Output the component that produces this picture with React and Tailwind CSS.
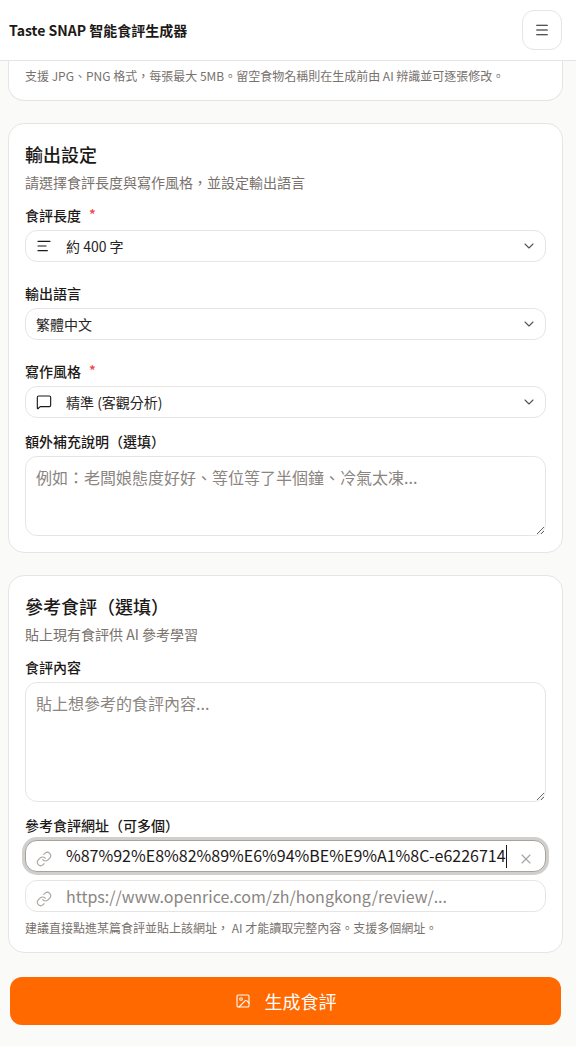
import React from 'react'
import { ChevronDown, Image, Link, Menu, MessageSquare, AlignLeft, X } from 'lucide-react'

const fontStack = { fontFamily: '"Noto Sans CJK TC", "Noto Sans", sans-serif' }

const Label = ({ children, required, className = '' }) => (
  <div className={`flex items-center text-sm font-medium leading-[20px] text-[#1c1917] ${className}`}>
    {children}
    {required && <span className="mb-[2px] ml-2 text-sm leading-[16px] text-[#ef4444]">*</span>}
  </div>
)

const Select = ({ icon: Icon, children, className = '' }) => (
  <div className={`flex h-8 items-center rounded-xl border border-[#e7e5e4] bg-white pl-[10px] pr-[8px] text-sm text-[#292524] ${className}`}>
    {Icon && <Icon className="mr-[14px] h-4 w-4 text-[#1c1917]" strokeWidth={1.7} />}
    <span className="flex-1">{children}</span>
    <ChevronDown className="h-4 w-4 text-[#57534e]" strokeWidth={1.6} />
  </div>
)

const Card = ({ title, subtitle, className = '', children }) => (
  <section className={`rounded-2xl border border-[#e7e5e4] bg-white px-4 pt-[18px] ${className}`}>
    <h2 className="text-lg font-medium leading-[24px] text-[#1c1917]">{title}</h2>
    <p className="mt-[6px] text-sm leading-[20px] text-[#78716c]">{subtitle}</p>
    {children}
  </section>
)

export default function App() {
  return (
    <div className="h-[1046px] w-[576px] overflow-hidden bg-[#fafaf9]" style={fontStack}>
      <header className="flex h-[61px] items-center justify-between border-b border-[#e7e5e4] bg-white pl-[9px] pr-[14px]">
        <h1 className="mb-[1px] text-sm font-semibold text-[#1c1917]">Taste SNAP 智能食評生成器</h1>
        <button className="flex h-10 w-10 items-center justify-center rounded-xl border border-[#e7e5e4] bg-white">
          <Menu className="h-4 w-4 text-[#1c1917]" strokeWidth={1.6} />
        </button>
      </header>

      <main className="ml-2 w-[555px]">
        <div className="flex h-[40px] items-start rounded-b-2xl border border-t-0 border-[#e7e5e4] bg-white px-4 pt-[7px] text-xs leading-[16px] text-[#78716c]">
          支援 JPG、PNG 格式，每張最大 5MB。留空食物名稱則在生成前由 AI 辨識並可逐張修改。
        </div>

        <Card
          title="輸出設定"
          subtitle="請選擇食評長度與寫作風格，並設定輸出語言"
          className="mt-[22px] h-[430px]"
        >
          <Label required className="mt-[13px]">食評長度</Label>
          <Select icon={AlignLeft} className="mt-[5px]">約 400 字</Select>
          <Label className="mt-[21px]">輸出語言</Label>
          <Select className="mt-[5px]">繁體中文</Select>
          <Label required className="mt-[21px]">寫作風格</Label>
          <Select icon={MessageSquare} className="mt-[5px]">精準 (客觀分析)</Select>
          <Label className="mt-[13px]">額外補充說明（選填）</Label>
          <textarea
            readOnly
            placeholder="例如：老闆娘態度好好、等位等了半個鐘、冷氣太凍..."
            className="mt-[5px] block h-20 w-full rounded-xl border border-[#e7e5e4] bg-white px-[10px] py-[8px] text-base leading-[24px] outline-none placeholder:text-[#8a8581]"
          />
        </Card>

        <Card
          title="參考食評（選填）"
          subtitle="貼上現有食評供 AI 參考學習"
          className="mt-[22px] h-[378px]"
        >
          <Label className="mt-[13px]">食評內容</Label>
          <textarea
            readOnly
            placeholder="貼上想參考的食評內容..."
            className="mt-[5px] block h-[120px] w-full rounded-xl border border-[#e7e5e4] bg-white px-[10px] py-[8px] text-base leading-[24px] outline-none placeholder:text-[#8a8581]"
          />
          <Label className="mt-[13px]">參考食評網址（可多個）</Label>
          <div className="mt-[5px] flex h-8 items-center rounded-xl border border-[#a8a29e] bg-white pl-[10px] pr-[11px] ring-[3px] ring-[#d0cfcd]">
            <Link className="mr-[14px] mt-[6px] h-4 w-4 text-[#a8a29e]" strokeWidth={1.6} />
            <span className="mb-[2px] text-base leading-[24px] whitespace-nowrap text-[#1c1917]">%87%92%E8%82%89%E6%94%BE%E9%A1%8C-e6226714</span>
            <span className="h-[23px] w-px bg-[#1c1917]" />
            <X className="ml-auto mt-[6px] h-4 w-4 text-[#a8a29e]" strokeWidth={1.6} />
          </div>
          <div className="mt-2 flex h-8 items-center rounded-xl border border-[#e7e5e4] bg-white pl-[10px]">
            <Link className="mr-[14px] mt-[6px] h-4 w-4 text-[#a8a29e]" strokeWidth={1.6} />
            <input
              readOnly
              placeholder="https://www.openrice.com/zh/hongkong/review/..."
              className="flex-1 bg-transparent text-base outline-none placeholder:text-[#8a8581]"
            />
          </div>
          <p className="mt-2 text-xs leading-[16px] text-[#78716c]">建議直接點進某篇食評並貼上該網址， AI 才能讀取完整內容。支援多個網址。</p>
        </Card>
      </main>

      <div className="ml-[10px] mt-[24px] w-[551px]">
        <button className="flex h-12 w-full items-center justify-center gap-[14px] rounded-xl bg-[#ff6900] text-lg font-normal text-white">
          <Image className="h-4 w-4" strokeWidth={1.6} />
          生成食評
        </button>
      </div>
    </div>
  )
}
